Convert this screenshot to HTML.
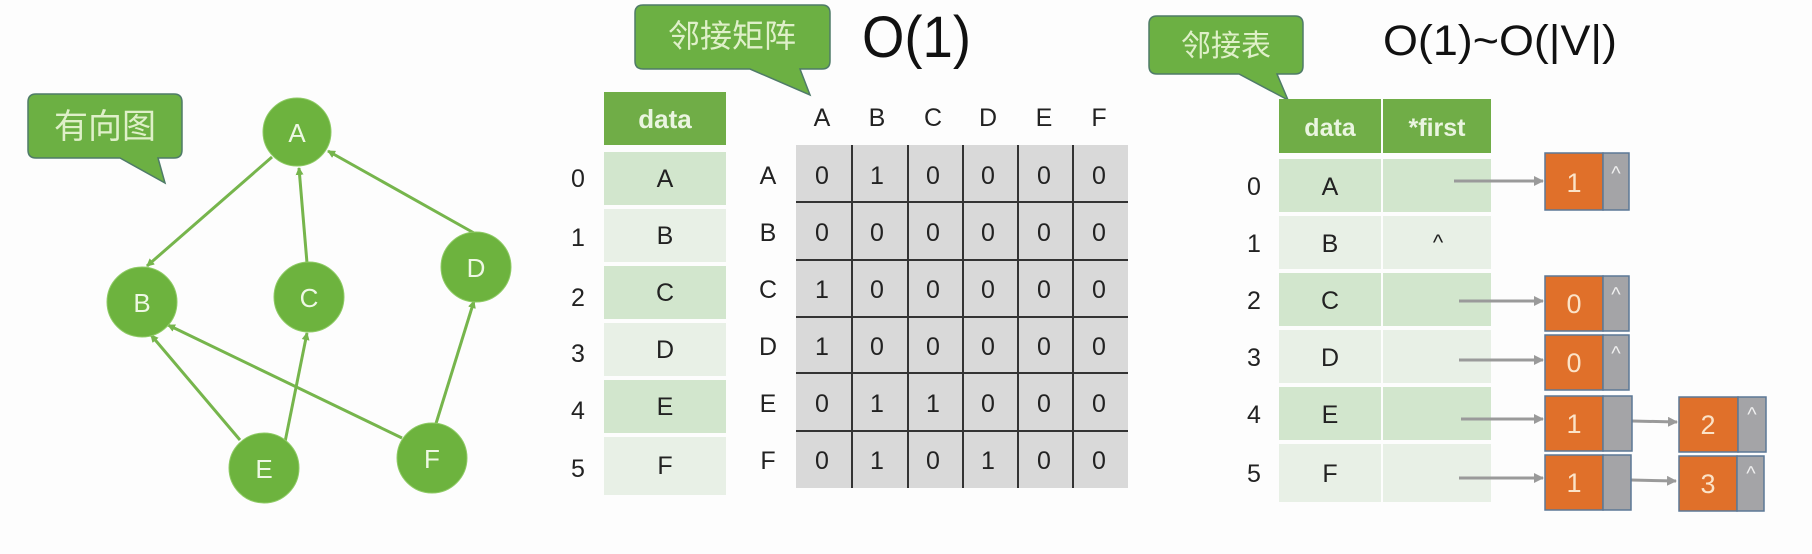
<!DOCTYPE html>
<html><head><meta charset="utf-8"><style>
html,body{margin:0;padding:0;background:#fff;}
svg{display:block;}
text{font-family:"Liberation Sans","Noto Sans CJK SC",sans-serif;}
</style></head><body>
<svg width="1812" height="554" viewBox="0 0 1812 554" xmlns="http://www.w3.org/2000/svg">
<defs>
<marker id="ga" markerWidth="8" markerHeight="8" refX="7" refY="4" orient="auto" markerUnits="userSpaceOnUse"><path d="M0,0 L8,4 L0,8 Z" fill="#76b54c"/></marker>
<marker id="gr" markerWidth="10" markerHeight="10" refX="9" refY="5" orient="auto" markerUnits="userSpaceOnUse"><path d="M0,0 L10,5 L0,10 Z" fill="#9a9a9a"/></marker>
</defs>
<rect width="1812" height="554" fill="#fdfdfd"/>

<!-- callout 有向图 -->
<path d="M36,94 H174 Q182,94 182,102 V150 Q182,158 174,158 H158 L165,183 L120,158 H36 Q28,158 28,150 V102 Q28,94 36,94 Z" fill="#6cb043" stroke="#4f7b68" stroke-width="1.5"/>
<text x="105" y="138" font-size="34" fill="#dff0c9" text-anchor="middle">有向图</text>

<!-- graph edges -->
<g stroke="#76b54c" stroke-width="3" fill="none" marker-end="url(#ga)">
<line x1="272" y1="157" x2="147" y2="266"/>
<line x1="307" y1="263" x2="299" y2="168"/>
<line x1="474" y1="233" x2="328" y2="151"/>
<line x1="240" y1="440" x2="151" y2="335"/>
<line x1="285" y1="442" x2="307" y2="333"/>
<line x1="402" y1="438" x2="168" y2="325"/>
<line x1="434" y1="430" x2="474" y2="301"/>
</g>
<g fill="#6db33e" stroke="#8fcb66" stroke-width="1">
<circle cx="297" cy="132" r="34"/>
<circle cx="142" cy="302" r="35"/>
<circle cx="309" cy="297" r="35"/>
<circle cx="476" cy="267" r="35"/>
<circle cx="264" cy="468" r="35"/>
<circle cx="432" cy="458" r="35"/>
</g>
<g font-size="26" fill="#eef8e4" text-anchor="middle">
<text x="297" y="142">A</text><text x="142" y="312">B</text><text x="309" y="307">C</text>
<text x="476" y="277">D</text><text x="264" y="478">E</text><text x="432" y="468">F</text>
</g>

<!-- callout 邻接矩阵 -->
<path d="M643,5 H822 Q830,5 830,13 V61 Q830,69 822,69 H800 L810,95 L750,69 H643 Q635,69 635,61 V13 Q635,5 643,5 Z" fill="#6cb043" stroke="#4f7b68" stroke-width="1.5"/>
<text x="732" y="47" font-size="32" fill="#dff0c9" text-anchor="middle">邻接矩阵</text>
<text x="862" y="57" font-size="58" fill="#111" textLength="109" lengthAdjust="spacingAndGlyphs">O(1)</text>

<!-- data column (matrix) -->
<rect x="604" y="92" width="122" height="53" fill="#70ad47"/>
<text x="665" y="128" font-size="26" font-weight="bold" fill="#eaf5e0" text-anchor="middle">data</text>
<g>
<rect x="604" y="152" width="122" height="53" fill="#d2e6cd"/>
<rect x="604" y="209" width="122" height="53" fill="#e8f0e6"/>
<rect x="604" y="266" width="122" height="53" fill="#d2e6cd"/>
<rect x="604" y="323" width="122" height="53" fill="#e8f0e6"/>
<rect x="604" y="380" width="122" height="53" fill="#d2e6cd"/>
<rect x="604" y="437" width="122" height="58" fill="#e8f0e6"/>
</g>
<g font-size="25" fill="#222" text-anchor="middle">
<text x="665" y="187">A</text><text x="665" y="244">B</text><text x="665" y="301">C</text>
<text x="665" y="358">D</text><text x="665" y="415">E</text><text x="665" y="474">F</text>
<text x="578" y="187">0</text><text x="578" y="246">1</text><text x="578" y="306">2</text>
<text x="578" y="362">3</text><text x="578" y="419">4</text><text x="578" y="477">5</text>
</g>

<!-- matrix -->
<rect x="796" y="145" width="332" height="343" fill="#d9d9d9"/>
<g stroke="#333" stroke-width="2">
<line x1="852" y1="145" x2="852" y2="488"/><line x1="908" y1="145" x2="908" y2="488"/>
<line x1="963" y1="145" x2="963" y2="488"/><line x1="1018" y1="145" x2="1018" y2="488"/>
<line x1="1073" y1="145" x2="1073" y2="488"/>
<line x1="796" y1="202" x2="1128" y2="202"/><line x1="796" y1="260" x2="1128" y2="260"/>
<line x1="796" y1="317" x2="1128" y2="317"/><line x1="796" y1="373" x2="1128" y2="373"/>
<line x1="796" y1="431" x2="1128" y2="431"/>
</g>
<g font-size="25" fill="#222" text-anchor="middle">
<text x="822" y="126">A</text><text x="877" y="126">B</text><text x="933" y="126">C</text>
<text x="988" y="126">D</text><text x="1044" y="126">E</text><text x="1099" y="126">F</text>
<text x="768" y="184">A</text><text x="768" y="241">B</text><text x="768" y="298">C</text>
<text x="768" y="355">D</text><text x="768" y="412">E</text><text x="768" y="469">F</text>
</g>
<g font-size="25" fill="#222" text-anchor="middle">
<text y="184"><tspan x="822">0</tspan><tspan x="877">1</tspan><tspan x="933">0</tspan><tspan x="988">0</tspan><tspan x="1044">0</tspan><tspan x="1099">0</tspan></text>
<text y="241"><tspan x="822">0</tspan><tspan x="877">0</tspan><tspan x="933">0</tspan><tspan x="988">0</tspan><tspan x="1044">0</tspan><tspan x="1099">0</tspan></text>
<text y="298"><tspan x="822">1</tspan><tspan x="877">0</tspan><tspan x="933">0</tspan><tspan x="988">0</tspan><tspan x="1044">0</tspan><tspan x="1099">0</tspan></text>
<text y="355"><tspan x="822">1</tspan><tspan x="877">0</tspan><tspan x="933">0</tspan><tspan x="988">0</tspan><tspan x="1044">0</tspan><tspan x="1099">0</tspan></text>
<text y="412"><tspan x="822">0</tspan><tspan x="877">1</tspan><tspan x="933">1</tspan><tspan x="988">0</tspan><tspan x="1044">0</tspan><tspan x="1099">0</tspan></text>
<text y="469"><tspan x="822">0</tspan><tspan x="877">1</tspan><tspan x="933">0</tspan><tspan x="988">1</tspan><tspan x="1044">0</tspan><tspan x="1099">0</tspan></text>
</g>

<!-- callout 邻接表 -->
<path d="M1157,16 H1295 Q1303,16 1303,24 V66 Q1303,74 1295,74 H1277 L1288,100 L1239,74 H1157 Q1149,74 1149,66 V24 Q1149,16 1157,16 Z" fill="#6cb043" stroke="#4f7b68" stroke-width="1.5"/>
<text x="1226" y="56" font-size="30" fill="#dff0c9" text-anchor="middle">邻接表</text>
<text x="1383" y="55" font-size="43" fill="#111" textLength="234" lengthAdjust="spacingAndGlyphs">O(1)~O(|V|)</text>

<!-- adjacency list table -->
<rect x="1279" y="99" width="102" height="54" fill="#70ad47"/>
<rect x="1383" y="99" width="108" height="54" fill="#70ad47"/>
<text x="1330" y="136" font-size="25" font-weight="bold" fill="#eaf5e0" text-anchor="middle">data</text>
<text x="1437" y="136" font-size="25" font-weight="bold" fill="#eaf5e0" text-anchor="middle">*first</text>
<g>
<rect x="1279" y="159" width="102" height="53" fill="#d2e6cd"/><rect x="1383" y="159" width="108" height="53" fill="#d2e6cd"/>
<rect x="1279" y="216" width="102" height="53" fill="#e8f0e6"/><rect x="1383" y="216" width="108" height="53" fill="#e8f0e6"/>
<rect x="1279" y="273" width="102" height="53" fill="#d2e6cd"/><rect x="1383" y="273" width="108" height="53" fill="#d2e6cd"/>
<rect x="1279" y="330" width="102" height="53" fill="#e8f0e6"/><rect x="1383" y="330" width="108" height="53" fill="#e8f0e6"/>
<rect x="1279" y="387" width="102" height="53" fill="#d2e6cd"/><rect x="1383" y="387" width="108" height="53" fill="#d2e6cd"/>
<rect x="1279" y="444" width="102" height="58" fill="#e8f0e6"/><rect x="1383" y="444" width="108" height="58" fill="#e8f0e6"/>
</g>
<g font-size="25" fill="#222" text-anchor="middle">
<text x="1330" y="195">A</text><text x="1330" y="252">B</text><text x="1330" y="309">C</text>
<text x="1330" y="366">D</text><text x="1330" y="423">E</text><text x="1330" y="482">F</text>
<text x="1254" y="195">0</text><text x="1254" y="252">1</text><text x="1254" y="309">2</text>
<text x="1254" y="366">3</text><text x="1254" y="423">4</text><text x="1254" y="482">5</text>
<text x="1438" y="250" font-size="22">^</text>
</g>

<!-- arrows -->
<g stroke="#9a9a9a" stroke-width="3" marker-end="url(#gr)">
<line x1="1454" y1="181" x2="1543" y2="181"/>
<line x1="1459" y1="301" x2="1543" y2="301"/>
<line x1="1459" y1="360" x2="1543" y2="360"/>
<line x1="1461" y1="419" x2="1543" y2="419"/>
<line x1="1459" y1="478" x2="1543" y2="478"/>
<line x1="1632" y1="421" x2="1677" y2="422"/>
<line x1="1631" y1="480" x2="1676" y2="481"/>
</g>

<!-- nodes -->
<g stroke="#5c7896" stroke-width="1.5">
<rect x="1545" y="153" width="58" height="57" fill="#e0702a"/><rect x="1603" y="153" width="26" height="57" fill="#a4a4a7"/>
<rect x="1545" y="276" width="58" height="55" fill="#e0702a"/><rect x="1603" y="276" width="26" height="55" fill="#a4a4a7"/>
<rect x="1545" y="335" width="58" height="55" fill="#e0702a"/><rect x="1603" y="335" width="26" height="55" fill="#a4a4a7"/>
<rect x="1545" y="396" width="58" height="55" fill="#e0702a"/><rect x="1603" y="396" width="29" height="55" fill="#a4a4a7"/>
<rect x="1545" y="455" width="58" height="55" fill="#e0702a"/><rect x="1603" y="455" width="28" height="55" fill="#a4a4a7"/>
<rect x="1679" y="397" width="59" height="55" fill="#e0702a"/><rect x="1738" y="397" width="28" height="55" fill="#a4a4a7"/>
<rect x="1679" y="456" width="58" height="55" fill="#e0702a"/><rect x="1737" y="456" width="27" height="55" fill="#a4a4a7"/>
</g>
<g font-size="27" fill="#fbe3c8" text-anchor="middle">
<text x="1574" y="192">1</text><text x="1574" y="313">0</text><text x="1574" y="372">0</text>
<text x="1574" y="433">1</text><text x="1574" y="492">1</text>
<text x="1708" y="434">2</text><text x="1708" y="493">3</text>
</g>
<g font-size="20" fill="#f0f0f0" text-anchor="middle">
<text x="1616" y="180">^</text><text x="1616" y="301">^</text><text x="1616" y="360">^</text>
<text x="1752" y="421">^</text><text x="1751" y="480">^</text>
</g>
</svg>
</body></html>
